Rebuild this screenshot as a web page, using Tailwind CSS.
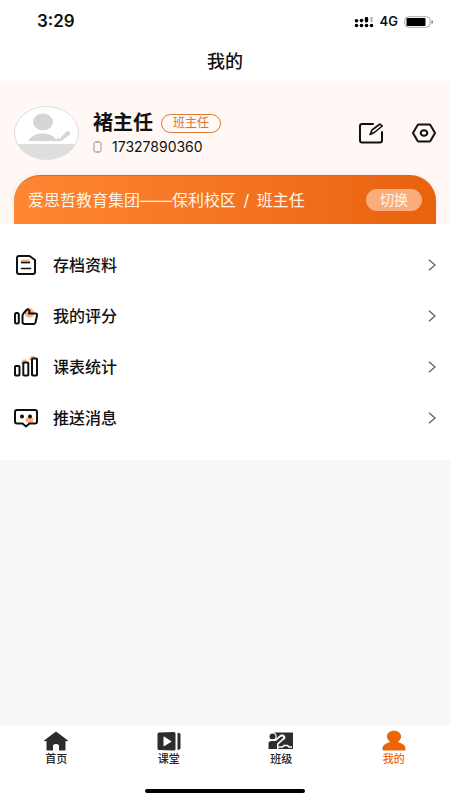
<!DOCTYPE html>
<html lang="zh-CN">
<head>
<meta charset="utf-8">
<meta name="viewport" content="width=device-width, initial-scale=1">
<title>我的</title>
<script src="https://cdn.jsdelivr.net/npm/@tailwindcss/browser@4"></script>
</head>
<body class="flex min-h-screen flex-col bg-[#f7f7f7] font-[Inter,'Noto_Sans_CJK_SC',sans-serif] text-[#111]">
  <header class="bg-white">
    <div class="flex h-11 items-center justify-between pr-4 pl-[37px]">
      <span class="text-[17px] font-semibold">3:29</span>
      <div class="flex items-center gap-1.5">
        <svg class="h-3 w-5" viewBox="0 0 20 12" aria-hidden="true">
          <g fill="#000"><circle cx="2.5" cy="9.5" r="1.8"/><circle cx="7.5" cy="9.5" r="1.8"/><circle cx="12.5" cy="9.5" r="1.8"/><circle cx="17.5" cy="9.5" r="1.8"/><circle cx="2.5" cy="4.8" r="1.8"/><circle cx="7.5" cy="4.6" r="1.8"/><rect x="10.8" y="1" width="3.4" height="5.4" rx="1.4"/></g>
          <path d="M17.5 1v5" stroke="#aaa" stroke-width="2"/>
        </svg>
        <span class="text-[13px] font-semibold">4G</span>
        <svg class="h-3 w-[30px]" viewBox="0 0 30 12" aria-hidden="true">
          <rect x=".7" y=".7" width="25.500" height="10.600" rx="4" fill="#fff" stroke="#aaa"/><rect x="2.500" y="2" width="19" height="8" rx="1"/><path d="M27.500 4v4q1.600-.6 1.600-2t-1.600-2z" fill="#777"/>
        </svg>
      </div>
    </div>
    <h1 class="h-[37px] text-center text-lg leading-9 font-medium">我的</h1>
  </header>

  <main>
    <section class="bg-[#fff8f5] px-[14px]">
      <div class="flex h-[94px] items-center pt-2.5">
        <svg class="h-[54px] w-[65px] shrink-0" viewBox="0 0 65 54" role="img" aria-label="头像">
          <defs><clipPath id="avatar"><ellipse cx="32.500" cy="27" rx="32" ry="26.500"/></clipPath></defs>
          <g clip-path="url(#avatar)"><path fill="#fff" d="M0 0h65v54H0z"/><path fill="#dedede" d="M0 38h65v16H0z"/></g>
          <ellipse cx="32.500" cy="27" rx="32" ry="26.500" fill="none" stroke="#dedede"/>
          <ellipse cx="29" cy="16" rx="10" ry="8.500" fill="#d5d5d5"/>
          <path d="M14 35C17 30 22 27.500 29 27.500S39 30 42 33.500L45 35z" fill="#d5d5d5"/>
          <path d="M43.500 31.500L45.500 33L51.500 26.500Q53.500 24 55.500 26T54.500 29.500L47.500 35H42z" fill="#d5d5d5"/>
        </svg>
        <div class="ml-[14px] flex flex-col">
          <div class="flex items-center gap-2">
            <h2 class="text-xl leading-7 font-bold">褚主任</h2>
            <span class="flex h-[19px] items-center rounded-full border border-[#d97b36] px-[11px] text-xs text-[#d9762e]">班主任</span>
          </div>
          <div class="flex items-center gap-2.5">
            <svg class="h-3 w-[9px]" viewBox="0 0 9 12" fill="none" stroke="#777" aria-hidden="true"><path d="M2.500 1h4M2.500 11h4"/><path d="M2.500 1Q1 1 1 3v6q0 2 1.500 2M6.500 1Q8 1 8 3v6q0 2-1.500 2" stroke="#999"/></svg>
            <span class="text-sm">17327890360</span>
          </div>
        </div>
        <div class="ml-auto flex items-center gap-7">
          <button type="button" aria-label="编辑" class="cursor-pointer">
            <svg class="h-6 w-[25px]" viewBox="0 0 25 24" fill="none" stroke="#111" stroke-width="2" stroke-linejoin="round"><path d="M14 3H3Q1 3 1 5v14.500q0 2 2 2h18q2 0 2-2V11" stroke-linecap="round"/><path d="M11 13.500l2-4.500 8-6 2.300 2-8 6.500z" stroke-width="1.600"/></svg>
          </button>
          <button type="button" aria-label="设置" class="cursor-pointer">
            <svg class="h-6 w-6" viewBox="0 0 24 24" fill="none" stroke="#111" stroke-width="2" stroke-linejoin="round"><path d="M7 3.500h10q1 0 1.500.8L23 12l-4.500 7.700q-.5.800-1.500.8H7q-1 0-1.500-.8L1 12l4.500-7.700Q6 3.500 7 3.500z"/><ellipse cx="12" cy="12" rx="3.300" ry="2.800"/></svg>
          </button>
        </div>
      </div>
      <div class="flex h-[49px] items-center justify-between rounded-t-[26px] border-t border-[#d96a1c] bg-linear-to-r from-[#ff8633] to-[#e9620b] px-[14px] text-[#fff5e6] shadow-[0_0_6px_#e8e8e8]">
        <p class="text-base">爱思哲教育集团——保利校区<span class="mx-[3px]"> / </span>班主任</p>
        <button type="button" class="h-[22px] cursor-pointer rounded-full bg-[#f9ad7b] px-[14px] text-sm leading-5">切换</button>
      </div>
    </section>

    <nav aria-label="菜单" class="relative bg-white px-[14px] pt-[15px] pb-[17px] font-medium">
      <a href="#archive" class="flex h-[51px] items-center">
        <svg class="h-6 w-6" viewBox="0 0 24 24" fill="none" stroke="#111" stroke-width="2" stroke-linejoin="round" stroke-linecap="round"><rect x="7" y="6.500" width="9" height="4" rx="1" fill="#ffb17c" stroke="none"/><path d="M5 3h10.500L21 7v12q0 2-2 2H5q-2 0-2-2V5q0-2 2-2z"/><path d="M7.500 9.500h8M7.500 15.500h9" stroke-width="1.600"/></svg>
        <span class="ml-[15px] grow text-base">存档资料</span>
        <svg class="h-3 w-2" viewBox="0 0 8 12" fill="none" stroke="#666" stroke-width="1.400"><path d="M1 .8L7 6l-6 5.200"/></svg>
      </a>
      <a href="#rating" class="flex h-[51px] items-center">
        <svg class="h-6 w-6" viewBox="0 0 24 24" fill="none" stroke="#111" stroke-width="2" stroke-linejoin="round"><circle cx="15.500" cy="9" r="4.700" fill="#ffb17c" stroke="none"/><rect x="1" y="9" width="3.800" height="10.500" rx="1.500"/><path d="M8.500 12q0-1.500 1-2.500l3-3.500q1.500-1.500 2.500 0t0 3.500h6.500q2 0 1.500 2l-1.500 7q-.5 1.500-2 1.500h-8.500q-2.500 0-2.500-2z"/></svg>
        <span class="ml-[15px] grow text-base">我的评分</span>
        <svg class="h-3 w-2" viewBox="0 0 8 12" fill="none" stroke="#666" stroke-width="1.400"><path d="M1 .8L7 6l-6 5.200"/></svg>
      </a>
      <a href="#statistics" class="flex h-[51px] items-center">
        <svg class="h-6 w-6" viewBox="0 0 24 24" fill="none" stroke="#111" stroke-width="2"><path d="M7.500 8.500l2-3h3M15.500 5l2-3h3" stroke="#ffb17c" stroke-width="2"/><rect x="1" y="11" width="4.500" height="9.500" rx=".8"/><rect x="9.300" y="7.500" width="5" height="13" rx=".8"/><rect x="18" y="3.500" width="5" height="17" rx=".8"/></svg>
        <span class="ml-[15px] grow text-base">课表统计</span>
        <svg class="h-3 w-2" viewBox="0 0 8 12" fill="none" stroke="#666" stroke-width="1.400"><path d="M1 .8L7 6l-6 5.200"/></svg>
      </a>
      <a href="#messages" class="flex h-[51px] items-center">
        <svg class="h-6 w-6" viewBox="0 0 24 24" fill="none" stroke="#111" stroke-width="2" stroke-linejoin="round"><ellipse cx="15.500" cy="14" rx="4" ry="3" fill="#ffb17c" stroke="none"/><path d="M3 4h18q2 0 2 2v9.500q0 2-2 2h-5.500L12 20.500l-3.500-3H3q-2 0-2-2V6q0-2 2-2z"/><circle cx="8" cy="10.500" r="2" fill="#111" stroke="none"/><circle cx="16" cy="10.500" r="2" fill="#111" stroke="none"/></svg>
        <span class="ml-[15px] grow text-base">推送消息</span>
        <svg class="h-3 w-2" viewBox="0 0 8 12" fill="none" stroke="#666" stroke-width="1.400"><path d="M1 .8L7 6l-6 5.200"/></svg>
      </a>
    </nav>
  </main>

  <footer class="mt-auto bg-white pt-1 pb-[7px]">
    <nav aria-label="主导航" class="grid grid-cols-4 text-[11px] leading-3 font-medium text-[#222]">
      <a href="#home" class="flex flex-col items-center">
        <svg class="h-6 w-6" viewBox="0 0 24 24"><path d="M12 2.500L0 11.500q.5 1 2.500.5v8.500q0 1 1 1H9V17q0-2 3-2t3 2v4.500h5.500q1 0 1-1V12q2 .5 2.500-.5z" fill="#2d2d2d"/></svg>
        首页
      </a>
      <a href="#class" class="flex flex-col items-center">
        <svg class="h-6 w-6" viewBox="0 0 24 24"><path d="M2 3.500L17 3q1.500 0 1.500 1.500V20q0 1.500-1.500 1.500L2 21Q.5 21 .5 19.500V5Q.5 3.500 2 3.500z" fill="#2d2d2d"/><path d="M20.500 3.800q3 0 3 1.700v13.500q0 1.800-3 1.800z" fill="#2d2d2d"/><path d="M6.500 8.200q0-1 1-.5l6.500 4.300q.7.500 0 1l-6.500 4q-1 .5-1-.5z" fill="#fff"/></svg>
        课堂
      </a>
      <a href="#group" class="flex flex-col items-center">
        <svg class="h-6 w-[26px]" viewBox="0 0 26 24"><path d="M6 3.500h18.500q.5 0 .5.500v15.500q0 .5-.5.500H8z" fill="#2d2d2d"/><circle cx="4.500" cy="7.500" r="4.200" fill="#fff"/><circle cx="4.500" cy="7.500" r="3" fill="#2d2d2d"/><path d="M.5 20v-5.500Q.5 11.500 3.500 11.500H7.500l5-4.500q2.500-1.500 3.500.5t-1 2.500L9.500 15v5z" fill="#fff" stroke="#fff" stroke-width="2"/><path d="M.5 20v-5.500q0-2.500 3-2.500h4.500l4.500-4q2-1 2.500 0t-1 2L9 14.500V20z" fill="#2d2d2d"/><path d="M10.500 18h4l1.500-1.500h3.500l1.500 1.500h3" fill="none" stroke="#fff" stroke-width="1.600"/></svg>
        班级
      </a>
      <a href="#mine" aria-current="page" class="flex flex-col items-center text-[#ef6a10]">
        <svg class="h-6 w-6" viewBox="0 0 24 24"><path d="M12 1.800c4.500 0 7 2.500 7 5.800 0 2.600-1.500 4-3 5.200.5 1.300 7.500 1.500 7.500 6.700v1q0 1-1.500 1H2q-1.500 0-1.500-1v-1C.5 14.300 7.500 14.100 8 12.800c-1.500-1.200-3-2.600-3-5.200 0-3.300 2.500-5.800 7-5.800z" fill="#ec6608"/></svg>
        我的
      </a>
    </nav>
    <div class="mx-auto mt-6 h-1 w-40 rounded-full bg-black"></div>
  </footer>
</body>
</html>
